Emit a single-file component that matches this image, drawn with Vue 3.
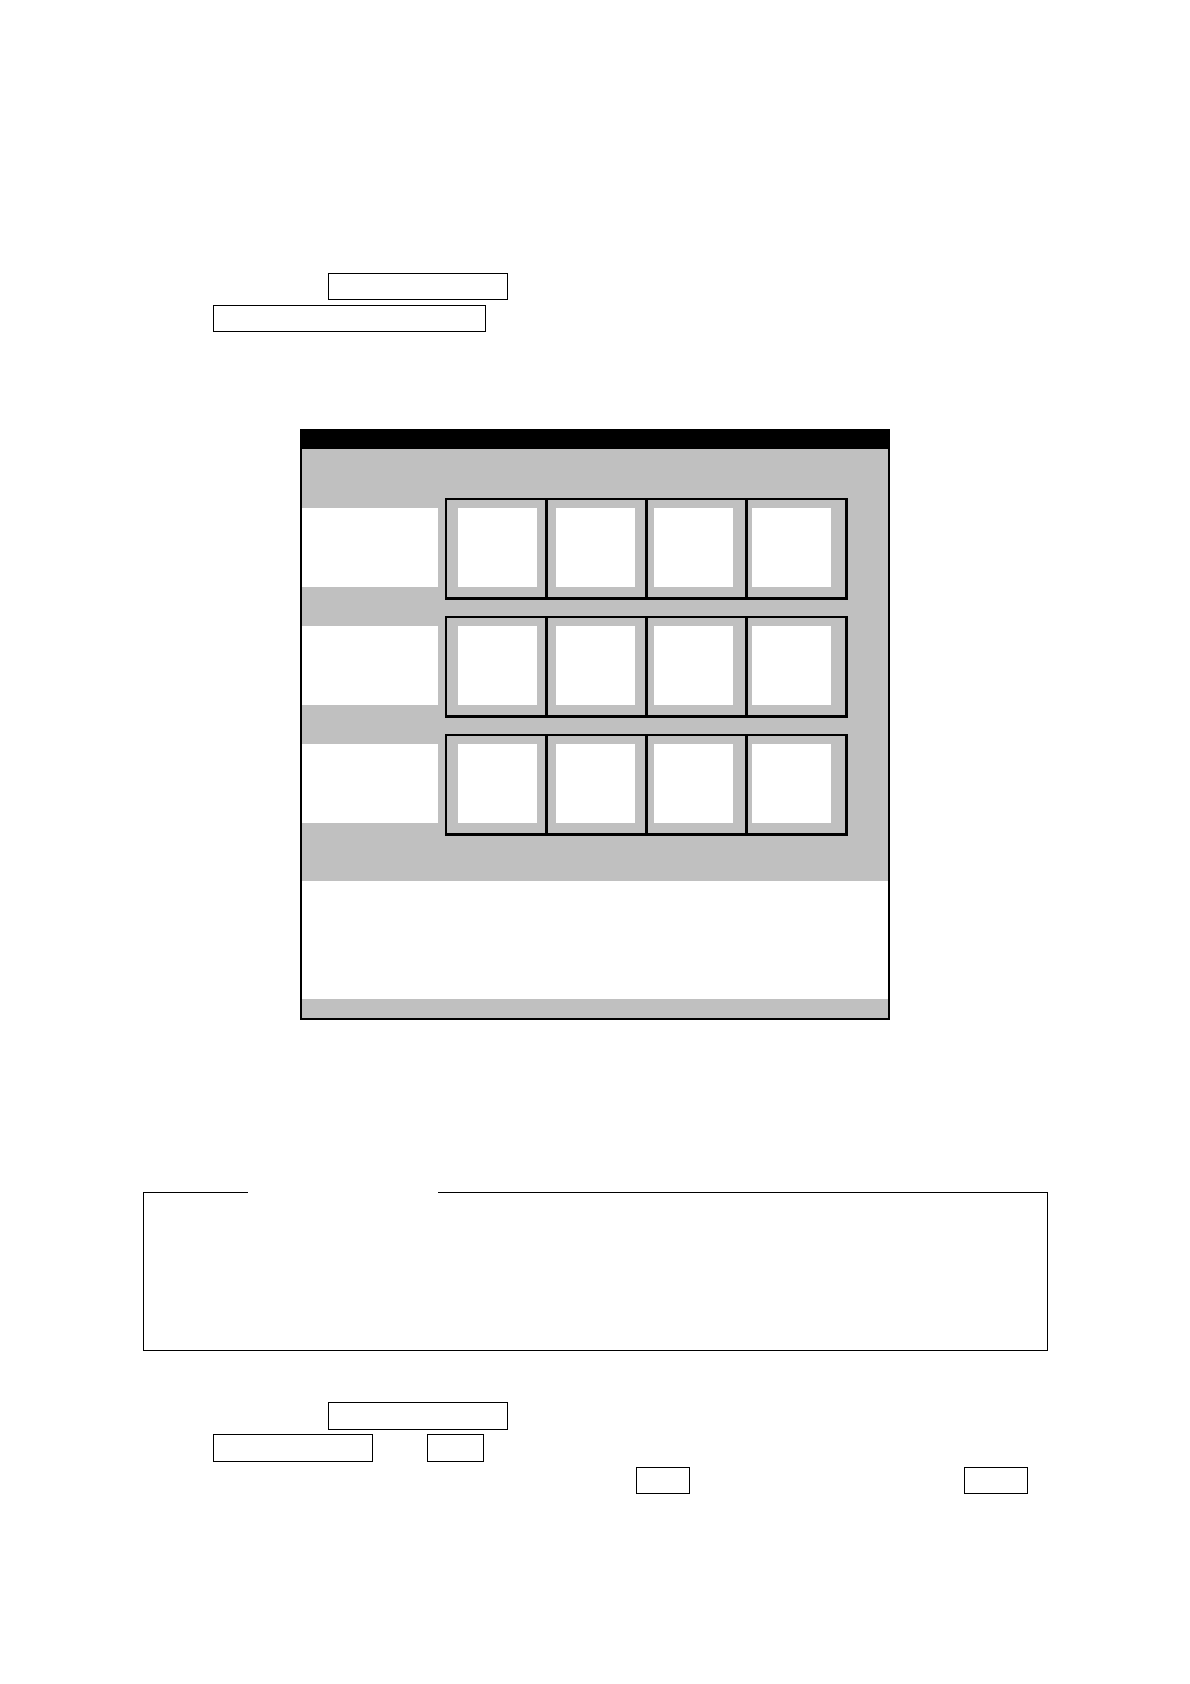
<script setup>
const rows = 3
const columns = 4
</script>

<template>
  <main class="page">
    <section class="fields intro">
      <div class="line"><span class="box wide indent"></span></div>
      <div class="line"><span class="box full"></span></div>
    </section>

    <section class="panel">
      <header class="titlebar"></header>
      <div class="body">
        <div v-for="row in rows" :key="row" class="row">
          <div class="label"></div>
          <div class="frame">
            <div class="cells">
              <span v-for="cell in columns" :key="cell" class="cell"></span>
            </div>
            <div class="tiles">
              <span v-for="tile in columns" :key="tile" class="tile"></span>
            </div>
          </div>
        </div>
      </div>
      <div class="message"></div>
      <footer class="status"></footer>
    </section>

    <fieldset class="note">
      <legend class="caption"></legend>
    </fieldset>

    <section class="fields steps">
      <div class="line"><span class="box tall wide indent"></span></div>
      <div class="line second">
        <span class="box tall medium"></span>
        <span class="box tall key"></span>
      </div>
      <div class="line third">
        <span class="box short"></span>
        <span class="box long"></span>
      </div>
    </section>
  </main>
</template>

<style>
body {
  margin: 0;
  background: #fff;
}
</style>

<style scoped>
.page,
.page * {
  box-sizing: border-box;
}

.page {
  padding: 273px 142px 190px;
  font-family: "Liberation Sans", sans-serif;
}

.fields {
  display: flex;
  flex-direction: column;
  gap: 5px;
  padding-left: 71px;
}

.line {
  display: flex;
}

.box {
  height: 27px;
  border: 1px solid #000;
}

.tall {
  height: 28px;
}

.indent {
  margin-left: 115px;
}

.wide {
  width: 180px;
}

.full {
  width: 273px;
}

.medium {
  width: 160px;
}

.key {
  width: 57px;
}

.short {
  width: 54px;
}

.long {
  width: 64px;
}

.panel {
  max-width: 590px;
  margin: 97px auto 0;
  border: 2px solid #000;
  background: #c0c0c0;
}

.titlebar {
  height: 18px;
  background: #000;
}

.body {
  display: flex;
  flex-direction: column;
  gap: 16px;
  padding: 49px 40px 45px 0;
}

.row {
  display: flex;
  gap: 7px;
}

.label {
  width: 136px;
  height: 79px;
  margin-top: 10px;
  background: #fff;
}

.frame {
  display: grid;
  flex: 1;
  height: 102px;
  border: solid #000;
  border-width: 2px 3px 3px 2px;
}

.cells,
.tiles {
  grid-area: 1 / 1;
}

.cells {
  display: grid;
  grid-template-columns: 98fr 100fr 100fr 100fr;
}

.cell + .cell {
  border-left: 3px solid #000;
}

.tiles {
  display: flex;
  gap: 19px;
  padding: 8px 0 0 11px;
}

.tile {
  width: 79px;
  height: 79px;
  background: #fff;
}

.message {
  height: 118px;
  background: #fff;
}

.status {
  height: 19px;
}

.note {
  height: 159px;
  min-width: 0;
  margin: 172px 0 0 1px;
  padding: 0;
  border: 1px solid #000;
}

.caption {
  width: 190px;
  height: 1px;
  margin-left: 104px;
  padding: 0;
}

.steps {
  gap: 4px;
  margin-top: 51px;
}

.second {
  gap: 54px;
}

.third {
  justify-content: flex-end;
  gap: 274px;
  padding: 1px 20px 0 0;
}
</style>
